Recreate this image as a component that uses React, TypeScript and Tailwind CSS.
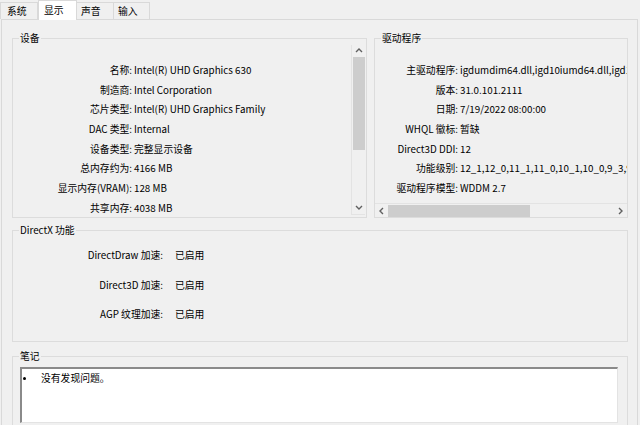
import React from 'react'

const DEVICE_ROWS: [string, string][] = [
  ['名称:', 'Intel(R) UHD Graphics 630'],
  ['制造商:', 'Intel Corporation'],
  ['芯片类型:', 'Intel(R) UHD Graphics Family'],
  ['DAC 类型:', 'Internal'],
  ['设备类型:', '完整显示设备'],
  ['总内存约为:', '4166 MB'],
  ['显示内存(VRAM):', '128 MB'],
  ['共享内存:', '4038 MB'],
]

const DRIVER_ROWS: [string, string][] = [
  ['主驱动程序:', 'igdumdim64.dll,igd10iumd64.dll,igd10iumd64.dll,igd12umd64.dll'],
  ['版本:', '31.0.101.2111'],
  ['日期:', '7/19/2022 08:00:00'],
  ['WHQL 徽标:', '暂缺'],
  ['Direct3D DDI:', '12'],
  ['功能级别:', '12_1,12_0,11_1,11_0,10_1,10_0,9_3,9_2,9_1'],
  ['驱动程序模型:', 'WDDM 2.7'],
]

const DX_ROWS: [string, string][] = [
  ['DirectDraw 加速:', '已启用'],
  ['Direct3D 加速:', '已启用'],
  ['AGP 纹理加速:', '已启用'],
]

function Chevron({ dir }: { dir: 'up' | 'down' | 'left' | 'right' }) {
  const pts = {
    up: '1,5 4,2 7,5',
    down: '1,2 4,5 7,2',
    left: '5,1 2,4 5,7',
    right: '2,1 5,4 2,7',
  }[dir]
  return (
    <svg width="8" height="8" viewBox="0 0 8 8">
      <polyline points={pts} fill="none" stroke="#606060" strokeWidth="1.4" />
    </svg>
  )
}

function Group({ title, className, children }: { title: string; className: string; children: React.ReactNode }) {
  return (
    <div className={`relative border border-[#dcdcdc] ${className}`}>
      <span className="absolute -top-[8px] left-[6px] px-[1px] bg-[#f0f0f0] leading-[15px] whitespace-nowrap">
        {title}
      </span>
      {children}
    </div>
  )
}

export default function App() {
  return (
    <div className="w-[640px] h-[425px] bg-[#f0f0f0] overflow-hidden text-[9.8px] text-black font-['Noto_Sans_CJK_SC',sans-serif]">
      {/* Tabs */}
      <div className="flex items-end h-[19px]">
        <div className="w-[38px] h-[17px] border-l border-t border-r border-[#d9d9d9] pl-[6px] leading-[16px]">系统</div>
        <div className="relative z-10 w-[39px] h-[20px] -mb-px bg-white border-l border-t border-r border-[#d9d9d9] pl-[5px] leading-[19px]">显示</div>
        <div className="w-[37px] h-[17px] border-t border-r border-[#d9d9d9] pl-[4px] leading-[16px]">声音</div>
        <div className="w-[36px] h-[17px] border-t border-r border-[#d9d9d9] pl-[4px] leading-[16px]">输入</div>
      </div>

      {/* Panel */}
      <div className="ml-px w-[637px] h-[406px] border border-b-0 border-[#d9d9d9] pl-[10px]">
        <div className="flex gap-[7px] mt-[18px]">
          <Group title="设备" className="w-[355px] h-[180px] flex">
            <div className="flex-1 pt-[22px] overflow-hidden">
              {DEVICE_ROWS.map(([k, v]) => (
                <div key={k} className="flex h-[19.7px] leading-[19.7px] whitespace-nowrap">
                  <div className="w-[119px] text-right">{k}</div>
                  <div className="pl-[2px]">{v}</div>
                </div>
              ))}
            </div>
            <div className="w-[14px] mt-[6px] mb-[2px] mr-px border-l border-b border-[#e3e3e3] flex flex-col">
              <div className="h-[12px] flex items-center justify-center">
                <Chevron dir="up" />
              </div>
              <div className="h-[93px] ml-px w-[12px] bg-[#cdcdcd]" />
              <div className="flex-1" />
              <div className="h-[13px] flex items-center justify-center">
                <Chevron dir="down" />
              </div>
            </div>
          </Group>

          <Group title="驱动程序" className="w-[254px] h-[180px] flex flex-col">
            <div className="flex-1 pt-[22px] overflow-hidden">
              {DRIVER_ROWS.map(([k, v]) => (
                <div key={k} className="flex h-[19.7px] leading-[19.7px] whitespace-nowrap">
                  <div className="w-[83px] shrink-0 text-right">{k}</div>
                  <div className="pl-[2px]">{v}</div>
                </div>
              ))}
            </div>
            <div className="h-[14px] border-t border-[#e3e3e3] flex items-center">
              <div className="w-[13px] h-full flex items-center justify-center">
                <Chevron dir="left" />
              </div>
              <div className="w-[142px] h-[12px] bg-[#cdcdcd]" />
              <div className="flex-1" />
              <div className="w-[13px] h-full flex items-center justify-center">
                <Chevron dir="right" />
              </div>
            </div>
          </Group>
        </div>

        <Group title="DirectX 功能" className="mt-[12px] w-[616px] h-[112px] pt-[10px]">
          {DX_ROWS.map(([k, v]) => (
            <div key={k} className="flex h-[29.6px] leading-[29.6px] whitespace-nowrap">
              <div className="w-[150px] text-right">{k}</div>
              <div className="pl-[12px]">{v}</div>
            </div>
          ))}
        </Group>

        <Group title="笔记" className="mt-[14px] w-[616px] h-[90px] pt-[10px] pl-[7px]">
          <div className="w-[598px] h-[56px] bg-white border-t-2 border-l-2 border-t-[#8a8a8a] border-l-[#8a8a8a] border-r border-b border-r-[#e3e3e3] border-b-[#e3e3e3] pt-[2px]">
            <div className="flex items-center h-[15px]">
              <div className="w-[19px] pl-[1px]">
                <div className="w-[3px] h-[3px] rounded-full bg-black" />
              </div>
              <span className="leading-[15px]">没有发现问题。</span>
            </div>
          </div>
        </Group>
      </div>
    </div>
  )
}
